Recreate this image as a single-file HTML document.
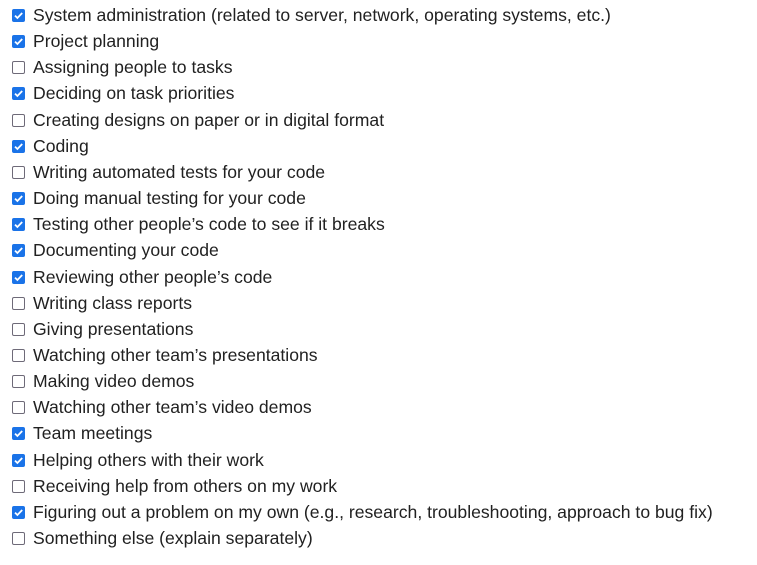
<!DOCTYPE html>
<html><head><style>
body{margin:0;background:#fff;font-family:"Liberation Sans",sans-serif;color:#212121;}
.b{position:absolute;left:12px;width:13px;height:13px;box-sizing:border-box;border-radius:2px;}
.c{background:#1a73e8;}
.u{border:1.5px solid #6e6a78;background:#fff;}
.t{position:absolute;left:33px;}
</style></head><body>
<div id="w"></div>
<script>
var items=[[1,"System administration (related to server, network, operating systems, etc.)"],[1,"Project planning"],[0,"Assigning people to tasks"],[1,"Deciding on task priorities"],[0,"Creating designs on paper or in digital format"],[1,"Coding"],[0,"Writing automated tests for your code"],[1,"Doing manual testing for your code"],[1,"Testing other people’s code to see if it breaks"],[1,"Documenting your code"],[1,"Reviewing other people’s code"],[0,"Writing class reports"],[0,"Giving presentations"],[0,"Watching other team’s presentations"],[0,"Making video demos"],[0,"Watching other team’s video demos"],[1,"Team meetings"],[1,"Helping others with their work"],[0,"Receiving help from others on my work"],[1,"Figuring out a problem on my own (e.g., research, troubleshooting, approach to bug fix)"],[0,"Something else (explain separately)"]];
var h="";
items.forEach(function(it,i){
var y=15.5+i*26.15;
var box=it[0]?'<div class="b c" style="top:'+(y-6.5)+'px"><svg width="13" height="13" viewBox="0 0 13 13"><path d="M3 6.6l2.4 2.4 4.8-5" stroke="#fff" stroke-width="1.8" fill="none"/></svg></div>':'<div class="b u" style="top:'+(y-6.5)+'px"></div>';
h+=box+'<div class="t" style="position:absolute;top:'+(y-10.5)+'px;font-size:17.6px;line-height:21px;white-space:nowrap">'+it[1]+'</div>';
});
document.getElementById("w").innerHTML=h;
</script>
</body></html>
